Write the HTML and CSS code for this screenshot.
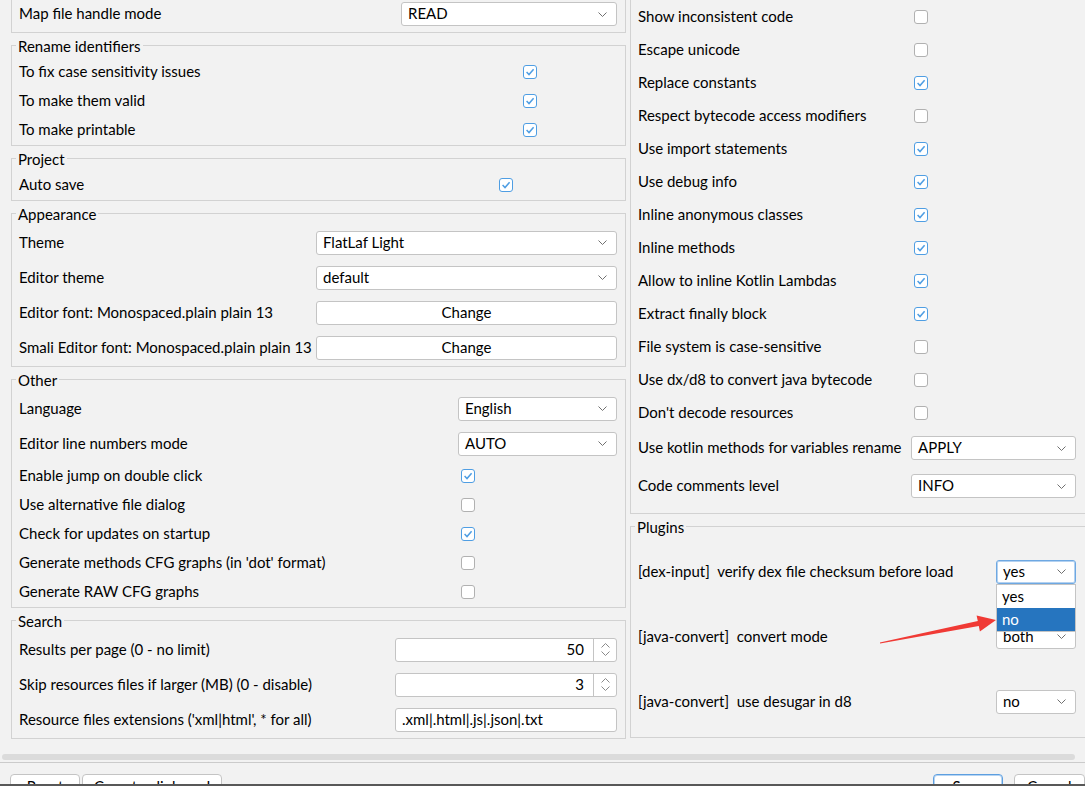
FILE: index.html
```html
<!DOCTYPE html>
<html>
<head>
<meta charset="utf-8">
<title>Preferences</title>
<link rel="stylesheet" href="styles.css">
</head>
<body>
<div class="window">
  <div class="viewport">
    <div class="content">
      <div class="col col-left">
        <div class="group group-cut g-map">
          <div class="row r24"><span class="label">Map file handle mode</span><div class="combo"><span class="val">READ</span><svg class="chev" width="9" height="5" viewBox="0 0 9 5"><path d="M0.5 0.5 L4.5 4.5 L8.5 0.5"/></svg></div></div>
        </div>
        <fieldset class="group g-rename"><legend>Rename identifiers</legend>
          <div class="row r29"><span class="label">To fix case sensitivity issues</span><span class="cb on"><svg width="12" height="12" viewBox="0 0 12 12"><path d="M2.6 6.1 L5 8.6 L9.6 3.2"/></svg></span></div>
          <div class="row r29"><span class="label">To make them valid</span><span class="cb on"><svg width="12" height="12" viewBox="0 0 12 12"><path d="M2.6 6.1 L5 8.6 L9.6 3.2"/></svg></span></div>
          <div class="row r29"><span class="label">To make printable</span><span class="cb on"><svg width="12" height="12" viewBox="0 0 12 12"><path d="M2.6 6.1 L5 8.6 L9.6 3.2"/></svg></span></div>
        </fieldset>
        <fieldset class="group g-project"><legend>Project</legend>
          <div class="row r29"><span class="label">Auto save</span><span class="cb on"><svg width="12" height="12" viewBox="0 0 12 12"><path d="M2.6 6.1 L5 8.6 L9.6 3.2"/></svg></span></div>
        </fieldset>
        <fieldset class="group g-appearance"><legend>Appearance</legend>
          <div class="row r35"><span class="label">Theme</span><div class="combo"><span class="val">FlatLaf Light</span><svg class="chev" width="9" height="5" viewBox="0 0 9 5"><path d="M0.5 0.5 L4.5 4.5 L8.5 0.5"/></svg></div></div>
          <div class="row r35"><span class="label">Editor theme</span><div class="combo"><span class="val">default</span><svg class="chev" width="9" height="5" viewBox="0 0 9 5"><path d="M0.5 0.5 L4.5 4.5 L8.5 0.5"/></svg></div></div>
          <div class="row r35"><span class="label">Editor font: Monospaced.plain plain 13</span><div class="btn-box"><span class="val">Change</span></div></div>
          <div class="row r35"><span class="label">Smali Editor font: Monospaced.plain plain 13</span><div class="btn-box"><span class="val">Change</span></div></div>
        </fieldset>
        <fieldset class="group g-other"><legend>Other</legend>
          <div class="row r35"><span class="label">Language</span><div class="combo"><span class="val">English</span><svg class="chev" width="9" height="5" viewBox="0 0 9 5"><path d="M0.5 0.5 L4.5 4.5 L8.5 0.5"/></svg></div></div>
          <div class="row r35"><span class="label">Editor line numbers mode</span><div class="combo"><span class="val">AUTO</span><svg class="chev" width="9" height="5" viewBox="0 0 9 5"><path d="M0.5 0.5 L4.5 4.5 L8.5 0.5"/></svg></div></div>
          <div class="row r29"><span class="label">Enable jump on double click</span><span class="cb on"><svg width="12" height="12" viewBox="0 0 12 12"><path d="M2.6 6.1 L5 8.6 L9.6 3.2"/></svg></span></div>
          <div class="row r29"><span class="label">Use alternative file dialog</span><span class="cb"></span></div>
          <div class="row r29"><span class="label">Check for updates on startup</span><span class="cb on"><svg width="12" height="12" viewBox="0 0 12 12"><path d="M2.6 6.1 L5 8.6 L9.6 3.2"/></svg></span></div>
          <div class="row r29"><span class="label">Generate methods CFG graphs (in 'dot' format)</span><span class="cb"></span></div>
          <div class="row r29"><span class="label">Generate RAW CFG graphs</span><span class="cb"></span></div>
        </fieldset>
        <fieldset class="group g-search"><legend>Search</legend>
          <div class="row r35"><span class="label">Results per page (0 - no limit)</span><div class="spinner"><span class="spin-val">50</span><span class="spin-btns"><svg width="9" height="5" viewBox="0 0 9 5"><path d="M0.5 4.5 L4.5 0.5 L8.5 4.5"/></svg><svg width="9" height="5" viewBox="0 0 9 5"><path d="M0.5 0.5 L4.5 4.5 L8.5 0.5"/></svg></span></div></div>
          <div class="row r35"><span class="label">Skip resources files if larger (MB) (0 - disable)</span><div class="spinner"><span class="spin-val">3</span><span class="spin-btns"><svg width="9" height="5" viewBox="0 0 9 5"><path d="M0.5 4.5 L4.5 0.5 L8.5 4.5"/></svg><svg width="9" height="5" viewBox="0 0 9 5"><path d="M0.5 0.5 L4.5 4.5 L8.5 0.5"/></svg></span></div></div>
          <div class="row r35"><span class="label">Resource files extensions ('xml|html', * for all)</span><div class="field"><span class="val">.xml|.html|.js|.json|.txt</span></div></div>
        </fieldset>
      </div>

      <div class="col col-right">
        <div class="group group-cut g-decomp">
          <div class="row r33"><span class="label">Show inconsistent code</span><span class="cb"></span></div>
          <div class="row r33"><span class="label">Escape unicode</span><span class="cb"></span></div>
          <div class="row r33"><span class="label">Replace constants</span><span class="cb on"><svg width="12" height="12" viewBox="0 0 12 12"><path d="M2.6 6.1 L5 8.6 L9.6 3.2"/></svg></span></div>
          <div class="row r33"><span class="label">Respect bytecode access modifiers</span><span class="cb"></span></div>
          <div class="row r33"><span class="label">Use import statements</span><span class="cb on"><svg width="12" height="12" viewBox="0 0 12 12"><path d="M2.6 6.1 L5 8.6 L9.6 3.2"/></svg></span></div>
          <div class="row r33"><span class="label">Use debug info</span><span class="cb on"><svg width="12" height="12" viewBox="0 0 12 12"><path d="M2.6 6.1 L5 8.6 L9.6 3.2"/></svg></span></div>
          <div class="row r33"><span class="label">Inline anonymous classes</span><span class="cb on"><svg width="12" height="12" viewBox="0 0 12 12"><path d="M2.6 6.1 L5 8.6 L9.6 3.2"/></svg></span></div>
          <div class="row r33"><span class="label">Inline methods</span><span class="cb on"><svg width="12" height="12" viewBox="0 0 12 12"><path d="M2.6 6.1 L5 8.6 L9.6 3.2"/></svg></span></div>
          <div class="row r33"><span class="label">Allow to inline Kotlin Lambdas</span><span class="cb on"><svg width="12" height="12" viewBox="0 0 12 12"><path d="M2.6 6.1 L5 8.6 L9.6 3.2"/></svg></span></div>
          <div class="row r33"><span class="label">Extract finally block</span><span class="cb on"><svg width="12" height="12" viewBox="0 0 12 12"><path d="M2.6 6.1 L5 8.6 L9.6 3.2"/></svg></span></div>
          <div class="row r33"><span class="label">File system is case-sensitive</span><span class="cb"></span></div>
          <div class="row r33"><span class="label">Use dx/d8 to convert java bytecode</span><span class="cb"></span></div>
          <div class="row r33"><span class="label">Don't decode resources</span><span class="cb"></span></div>
          <div class="row r38"><span class="label">Use kotlin methods for variables rename</span><div class="combo"><span class="val">APPLY</span><svg class="chev" width="9" height="5" viewBox="0 0 9 5"><path d="M0.5 0.5 L4.5 4.5 L8.5 0.5"/></svg></div></div>
          <div class="row r38"><span class="label">Code comments level</span><div class="combo"><span class="val">INFO</span><svg class="chev" width="9" height="5" viewBox="0 0 9 5"><path d="M0.5 0.5 L4.5 4.5 L8.5 0.5"/></svg></div></div>
        </div>
        <fieldset class="group g-plugins"><legend>Plugins</legend>
          <div class="row r65"><span class="label">[dex-input]  verify dex file checksum before load</span><div class="combo combo-sm focused"><span class="val">yes</span><svg class="chev" width="9" height="5" viewBox="0 0 9 5"><path d="M0.5 0.5 L4.5 4.5 L8.5 0.5"/></svg></div></div>
          <div class="row r65"><span class="label">[java-convert]  convert mode</span><div class="combo combo-sm"><span class="val">both</span><svg class="chev" width="9" height="5" viewBox="0 0 9 5"><path d="M0.5 0.5 L4.5 4.5 L8.5 0.5"/></svg></div></div>
          <div class="row r65"><span class="label">[java-convert]  use desugar in d8</span><div class="combo combo-sm"><span class="val">no</span><svg class="chev" width="9" height="5" viewBox="0 0 9 5"><path d="M0.5 0.5 L4.5 4.5 L8.5 0.5"/></svg></div></div>
        </fieldset>
      </div>
    </div>
    <div class="hscroll"><div class="thumb"></div></div>
  </div>
  <div class="buttonbar">
    <div class="btn-group">
      <button class="btn btn-reset">Reset</button>
      <button class="btn btn-copy">Copy to clipboard</button>
    </div>
    <div class="btn-group btn-group-right">
      <button class="btn btn-save">Save</button>
      <button class="btn btn-cancel">Cancel</button>
    </div>
  </div>
</div>
<div class="frame-edge"></div>

<div class="popup">
  <div class="popup-item">yes</div>
  <div class="popup-item sel">no</div>
</div>

<svg class="annot" width="1085" height="786" viewBox="0 0 1085 786">
  <polygon points="879.9,642.4 977.8,621.0 976.6,615.4 996,620 979.9,631.6 978.8,626.0 880.1,643.6"/>
</svg>
</body>
</html>
```

FILE: styles.css
```css
* {
  box-sizing: border-box;
}

html,
body {
  margin: 0;
  padding: 0;
}

body {
  position: relative;
  width: 1085px;
  height: 786px;
  overflow: hidden;
  background: #f2f2f2;
  color: #000;
  font-family: Lato, "Liberation Sans", sans-serif;
  font-size: 15px;
}

.window {
  height: 784px;
  overflow: hidden;
  display: flex;
  flex-direction: column;
}

.viewport {
  height: 762px;
  flex: none;
  overflow: hidden;
}

.content {
  display: flex;
  width: 1100px;
  height: 748px;
}

.col {
  flex: none;
}

.col-left {
  width: 626px;
  padding-left: 11px;
}

.col-right {
  width: 474px;
  padding-left: 4px;
}

/* group boxes */
.group {
  margin: 3px 0 0;
  padding: 3px 8px 1px 7px;
  border: 1px solid #d2d2d2;
  min-width: 0;
}

.group-cut {
  margin-top: 0;
  border-top: none;
}

.group legend {
  height: 18px;
  line-height: 20px;
  margin-left: -3px;
  padding: 0 2px;
}

.g-map {
  padding-top: 2px;
  padding-bottom: 6px;
  --lw: 382px;
}

.g-rename { --lw: 501px; }
.g-project { --lw: 477px; }
.g-appearance { --lw: 297px; }
.g-other { --lw: 439px; }
.g-search { --lw: 376px; }

.col-right .group {
  padding-right: 23px;
}

.g-decomp {
  padding-top: 0;
  padding-bottom: 8px;
  --lw: 273px;
}

.g-plugins {
  padding-top: 4px;
  padding-bottom: 3px;
  --lw: 358px;
}

/* rows */
.row {
  display: grid;
  grid-template-columns: var(--lw) 1fr;
  align-items: center;
}

.r24 { height: 24px; }
.r29 { height: 29px; }
.r33 { height: 33px; }
.r35 { height: 35px; }
.r38 { height: 38px; }
.r65 { height: 65px; }

.label {
  white-space: pre;
  line-height: 18px;
  padding-bottom: 2px;
}

.val {
  line-height: 18px;
  padding-bottom: 2px;
  white-space: pre;
}

/* checkbox */
.cb {
  width: 14px;
  height: 14px;
  margin-left: 3px;
  border: 1px solid #b1b1b1;
  border-radius: 3px;
  background: #fff;
  display: flex;
  align-items: center;
  justify-content: center;
}

.cb.on {
  border-color: #4f9ee3;
}

.cb svg path {
  fill: none;
  stroke: #4f9ee3;
  stroke-width: 1.5;
}

/* combo box */
.combo {
  height: 24px;
  display: flex;
  align-items: center;
  justify-content: space-between;
  padding: 0 9px 0 6px;
  background: #fff;
  border: 1px solid #c4c4c4;
  border-radius: 3px;
}

.chev path,
.spin-btns path {
  fill: none;
  stroke: #707070;
  stroke-width: 1;
}

.combo-sm {
  width: 80px;
}

.combo.focused {
  border-color: #6ea8e2;
  box-shadow: inset 0 0 0 1px #b3d1f0;
}

.btn-box {
  height: 24px;
  display: flex;
  align-items: center;
  justify-content: center;
  background: #fff;
  border: 1px solid #c4c4c4;
  border-radius: 3px;
}

/* spinner */
.spinner {
  height: 24px;
  display: flex;
  background: #fff;
  border: 1px solid #c4c4c4;
  border-radius: 3px;
}

.spin-val {
  flex: 1;
  text-align: right;
  padding-right: 9px;
  line-height: 21px;
}

.spin-btns {
  width: 23px;
  border-left: 1px solid #c4c4c4;
  display: flex;
  flex-direction: column;
  align-items: center;
  justify-content: center;
  gap: 3px;
}

.spin-btns path {
  stroke: #8a8a8a;
}

.field {
  height: 24px;
  display: flex;
  align-items: center;
  padding-left: 6px;
  background: #fff;
  border: 1px solid #c4c4c4;
  border-radius: 3px;
}

/* horizontal scrollbar */
.hscroll {
  height: 14px;
  padding: 6px 0 0 2px;
}

.thumb {
  width: 1073px;
  height: 6px;
  border-radius: 3px;
  background: #dbdbdb;
}

/* button bar */
.buttonbar {
  flex: none;
  display: flex;
  justify-content: space-between;
  border-top: 1px solid #cbcbcb;
  padding: 11px 0 0 10px;
}

.btn-group {
  display: flex;
  gap: 2px;
}

.btn-group-right {
  gap: 11px;
}

.btn {
  height: 24px;
  padding: 0;
  font-family: inherit;
  font-size: 15px;
  color: #000;
  background: #fff;
  border: 1px solid #c4c4c4;
  border-radius: 4px;
}

.btn-reset { width: 70px; }
.btn-copy { width: 140px; }
.btn-save {
  width: 70px;
  border-color: #5d9fe0;
  box-shadow: inset 0 0 0 1px #b6d4f2;
}
.btn-cancel { width: 71px; }

.frame-edge {
  height: 2px;
  background: #585858;
}

/* popup list */
.popup {
  position: absolute;
  left: 996px;
  top: 584px;
  width: 80px;
  background: #fff;
  border: 1px solid #c4c4c4;
}

.popup-item {
  height: 23px;
  line-height: 22px;
  padding-left: 5px;
}

.popup-item.sel {
  background: #2675bf;
  color: #fff;
}

/* red annotation arrow */
.annot {
  position: absolute;
  left: 0;
  top: 0;
  pointer-events: none;
}

.annot polygon {
  fill: #f03a35;
}
```
